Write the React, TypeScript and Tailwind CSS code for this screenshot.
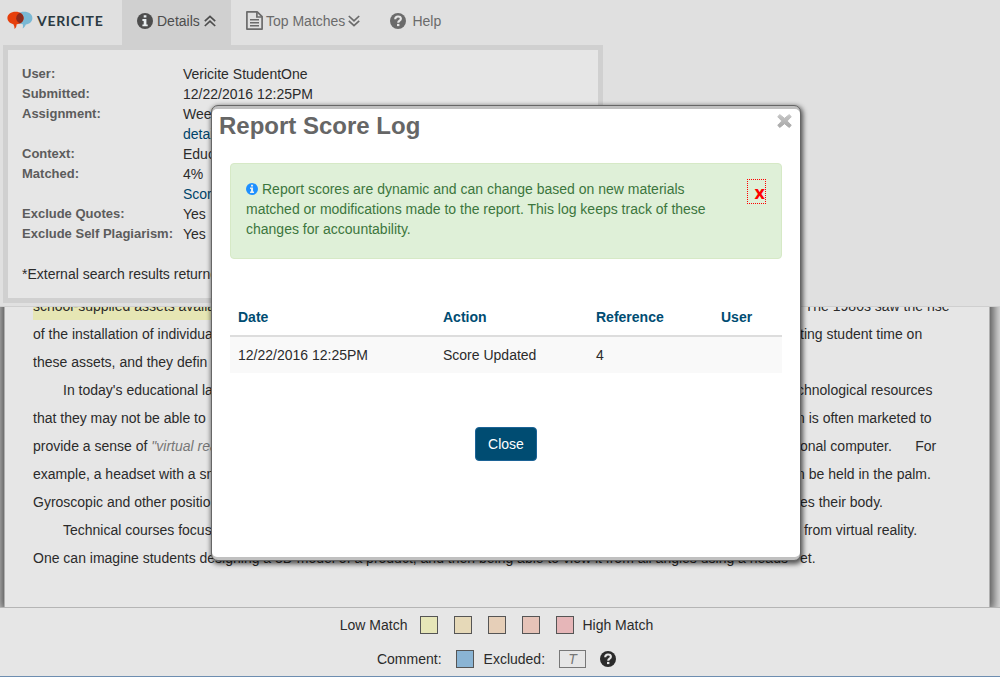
import type { ReactNode } from "react";

function InfoIcon({ size, className = "" }: { size: number; className?: string }) {
  return (
    <svg width={size} height={size} viewBox="0 0 16 16" className={className} aria-hidden="true">
      <circle cx="8" cy="8" r="8" fill="currentColor" />
      <path d="M6.700 2.300h2.700v2.300H6.700zM5.400 6.100h4v5.300h1.300v1.900H5.400v-1.900h1.300V8H5.400z" fill="#e9eef0" />
    </svg>
  );
}

function HelpIcon() {
  return (
    <svg width="16" height="16" viewBox="0 0 16 16" aria-hidden="true">
      <circle cx="8" cy="8" r="8" fill="currentColor" />
      <path d="M5.200 6.200C5.300 4.300 6.400 3.500 8 3.500c1.700 0 2.900.9 2.900 2.300c0 1.900-2.700 1.900-2.700 3.900" fill="none" stroke="#e6e6e6" strokeWidth="2.100" />
      <path d="M7 10.900h2.400v2.200H7z" fill="#e6e6e6" />
    </svg>
  );
}

function Logo() {
  return (
    <a href="#home" className="flex w-[122px] items-center gap-1 pl-[7px] text-[#2b3a42]">
      <svg width="26" height="19" viewBox="0 0 26 19" aria-hidden="true">
        <path
          d="M17 .8c5 0 8.4 2.700 8.400 6.400c0 3.300-2.800 5.700-6.600 6.200c-.6 1.800-1.600 3.100-3.100 4.100c.4-1.400.4-2.700.1-4.200C12 12.600 9.200 10.300 9.200 7.200C9.200 3.500 12.500.8 17 .8z"
          fill="#7ab8d4"
        />
        <path
          d="M8.600.8c4.700 0 8 2.700 8 6.300c0 3.400-2.900 6-7.100 6.300c.2 1.800-.5 3.300-1.900 4.500c0-1.700-.4-3.200-1.200-4.700C2.900 12.400.4 10.200.4 7.100C.4 3.500 4 .8 8.600.8z"
          fill="#e63f0c"
        />
        <path
          d="M12.900 1.700c2.300 1.200 3.700 3.100 3.700 5.400c0 2.300-1.400 4.300-3.600 5.400C10.700 11.400 9.200 9.500 9.200 7.200C9.200 4.800 10.600 2.900 12.900 1.700z"
          fill="#8e2a1c"
        />
      </svg>
      <span className="font-[Lato,sans-serif] text-sm font-bold tracking-wider">VERICITE</span>
    </a>
  );
}

function DoubleChevron({ up = false }: { up?: boolean }) {
  return (
    <svg width="12" height="12" viewBox="0 0 12 12" fill="none" stroke="currentColor" strokeWidth="1.700" aria-hidden="true">
      {up ? (
        <path d="M.8 6.200 6 1.400l5.200 4.800M.8 11 6 6.200 11.200 11" />
      ) : (
        <path d="M.8 1 6 5.800 11.200 1M.8 5.800 6 10.600l5.200-4.800" />
      )}
    </svg>
  );
}

function DocumentIcon() {
  return (
    <svg width="17" height="19" viewBox="0 0 17 19" fill="none" stroke="currentColor" strokeWidth="1.700" aria-hidden="true">
      <path d="M.9.9h10.300l4.900 4.800v12.400H.9z" strokeLinejoin="round" />
      <path d="M10.900 1v5h5" />
      <path d="M4 8.700h9M4 11.700h9M4 14.700h9" strokeWidth="1.400" />
    </svg>
  );
}

const details: { label: string; value: string; link?: string }[] = [
  { label: "User:", value: "Vericite StudentOne" },
  { label: "Submitted:", value: "12/22/2016 12:25PM" },
  { label: "Assignment:", value: "Week", link: "details" },
  { label: "Context:", value: "Educ" },
  { label: "Matched:", value: "4%", link: "Score" },
  { label: "Exclude Quotes:", value: "Yes" },
  { label: "Exclude Self Plagiarism:", value: "Yes" },
];

const lines: { start: ReactNode; end?: string; wide?: boolean; indent?: boolean }[] = [
  {
    start: <mark className="block h-7 bg-[#e6e6b4] text-inherit">school-supplied assets availa</mark>,
    end: "\u00a0\u00a0The 1980s saw the rise",
    wide: true,
  },
  { start: "of the installation of individual", end: "ting student time on" },
  { start: "these assets, and they defin" },
  { start: "In today's educational la", end: "chnological resources", wide: true, indent: true },
  { start: "that they may not be able to", end: "n is often marketed to", wide: true },
  {
    start: (
      <>
        provide a sense of <em className="text-[#777]">"virtual rea</em>
      </>
    ),
    end: "onal computer.\u00a0\u00a0\u00a0\u00a0\u00a0\u00a0For",
  },
  { start: "example, a headset with a sm", end: "n be held in the palm.", wide: true },
  { start: "Gyroscopic and other positio", end: "es their body." },
  { start: "Technical courses focus", end: "\u00a0from virtual reality.", indent: true },
  {
    start:
      "One can imagine students designing a 3D model of a product, and then being able to view it from all angles using a heads",
    end: "et.",
  },
];

const swatches = ["bg-[#e6e6b8]", "bg-[#e6d9b8]", "bg-[#e6cfb8]", "bg-[#e6c3b8]", "bg-[#e6b6b8]"];

export default function App() {
  return (
    <div className="relative flex min-h-screen flex-col bg-[#e6e6e6] font-['Liberation_Sans',Arial,sans-serif] text-sm leading-5 text-[#2b2b2b]">
      <header className="relative z-10 border-b border-[#cfcfcf] bg-[#e0e0e0] pb-[3px]">
        <nav className="flex h-[45px] items-stretch pb-1 text-[#6b6b6b]">
          <Logo />
          <button className="-mb-1 flex w-[109px] items-center gap-1 bg-[#d0d0d0] pb-1 pl-[15px] text-[#4d4d4d]">
            <InfoIcon size={16} />
            Details
            <DoubleChevron up />
          </button>
          <button className="flex items-center gap-[3px] pl-[15px]">
            <DocumentIcon />
            Top Matches
            <DoubleChevron />
          </button>
          <a href="#help" className="flex items-center gap-[6px] pl-[30px]">
            <HelpIcon />
            Help
          </a>
        </nav>
        <section className="ml-[3px] w-[600px] border-[5px] border-[#d0d0d0] bg-[#e6e6e6] p-[14px]">
          <dl>
            {details.map((d) => (
              <div key={d.label} className="flex">
                <dt className="w-[161px] shrink-0 whitespace-nowrap text-[13px] leading-5 font-bold text-[#5c5c5c]">{d.label}</dt>
                <dd>
                  {d.value}
                  {d.link && (
                    <a href="#more" className="block text-[#00446a]">
                      {d.link}
                    </a>
                  )}
                </dd>
              </div>
            ))}
          </dl>
          <p className="mt-5">*External search results returned</p>
        </section>
      </header>

      <main className="flex-1 overflow-hidden bg-[#e0e0e0] pr-[10px] pl-1">
        <article className="h-full border-x border-[#b0b0b0] bg-[#e6e6e6] px-7 pb-[35px] shadow-[0_0_10px_4px_rgba(0,0,0,0.65)]">
          <div className="-mt-[15px]">
            {lines.map((l, i) => (
              <div key={i} className="flex h-7 justify-between leading-7 whitespace-nowrap">
                <div className={l.indent ? "pl-[30px]" : ""}>{l.start}</div>
                {l.end && <div className={l.wide ? "w-[164px]" : "w-[161px]"}>{l.end}</div>}
              </div>
            ))}
          </div>
        </article>
      </main>

      <footer className="relative flex flex-col items-center gap-[14px] border-t border-b border-t-[#b5b5b5] border-b-[#6d8db0] bg-[#e6e6e6] pt-[7px] pr-[7px] pb-[7px]">
        <div className="flex items-center">
          Low Match
          <div className="mr-2 ml-[13px] flex gap-4">
            {swatches.map((c) => (
              <span key={c} className={`size-[18px] border border-[#555] ${c}`} />
            ))}
          </div>
          High Match
        </div>
        <div className="flex items-center">
          Comment:
          <span className="mr-[10px] ml-[14px] size-[18px] border border-[#555] bg-[#8ab4d4]" />
          Excluded:
          <span className="mr-[14px] ml-[14px] flex h-[18px] w-[27px] items-center justify-center border border-[#777] text-[#777] italic">
            T
          </span>
          <HelpIcon />
        </div>
      </footer>

      <div className="absolute inset-x-0 top-0 z-20 flex justify-center pt-[105px] pl-3">
        <div
          role="dialog"
          aria-labelledby="log-title"
          className="w-[590px] rounded-[7px] border border-[#666] bg-[#c0c0c0] pt-[3px] pb-[3px] shadow-[1px_2px_5px_1px_rgba(0,0,0,0.65)]"
        >
          <div className="rounded-[5px] bg-white pb-[96px]">
            <div className="flex items-start justify-between pt-1 pr-[7px] pl-[7px]">
              <h1 id="log-title" className="text-2xl leading-[26px] font-bold text-[#666]">
                Report Score Log
              </h1>
              <button aria-label="Close dialog">
                <svg width="17" height="16" viewBox="0 0 17 16" aria-hidden="true">
                  <defs>
                    <linearGradient id="cross" x1="0" y1="0" x2="0" y2="1">
                      <stop offset="0" stopColor="#c6c6c6" />
                      <stop offset="1" stopColor="#a8a8a8" />
                    </linearGradient>
                  </defs>
                  <path
                    d="M3.800 1.600 8.500 5.300 13.200 1.600 15.300 3.700 11.200 8 15.300 12.300 13.200 14.400 8.500 10.700 3.800 14.400 1.700 12.300 5.800 8 1.700 3.700z"
                    fill="url(#cross)"
                    stroke="url(#cross)"
                    strokeWidth="1"
                    strokeLinejoin="round"
                  />
                </svg>
              </button>
            </div>
            <div className="px-[18px] pt-6">
              <div className="flex items-start justify-between gap-4 rounded border border-[#d6e9c6] bg-[#dff0d8] px-[15px] pt-[15px] pb-[19px] text-[#3c763d]">
                <p>
                  <InfoIcon size={12} className="mr-1 inline-block align-[-1px] text-[#1e90ff]" />
                  Report scores are dynamic and can change based on new materials matched or modifications made to the
                  report. This log keeps track of these changes for accountability.
                </p>
                <button
                  aria-label="Dismiss"
                  className="flex h-[25px] w-[19px] shrink-0 items-center justify-end border border-dotted border-[#f00] font-['Noto_Sans',sans-serif] text-lg font-bold text-[#f00]"
                >
                  x
                </button>
              </div>
              <table className="mt-10 w-full table-fixed text-left">
                <thead className="border-b-2 border-[#ddd] text-[#004c72]">
                  <tr>
                    <th className="w-[205px] p-2">Date</th>
                    <th className="w-[153px] p-2">Action</th>
                    <th className="w-[125px] p-2">Reference</th>
                    <th className="p-2">User</th>
                  </tr>
                </thead>
                <tbody>
                  <tr className="bg-[#f9f9f9]">
                    <td className="p-2">12/22/2016 12:25PM</td>
                    <td className="p-2">Score Updated</td>
                    <td className="p-2">4</td>
                    <td className="p-2" />
                  </tr>
                </tbody>
              </table>
              <div className="mt-[54px] flex justify-center">
                <button className="rounded border border-[#1c6396] bg-[#004c72] px-3 py-[6px] text-white">Close</button>
              </div>
            </div>
          </div>
        </div>
      </div>
    </div>
  );
}
